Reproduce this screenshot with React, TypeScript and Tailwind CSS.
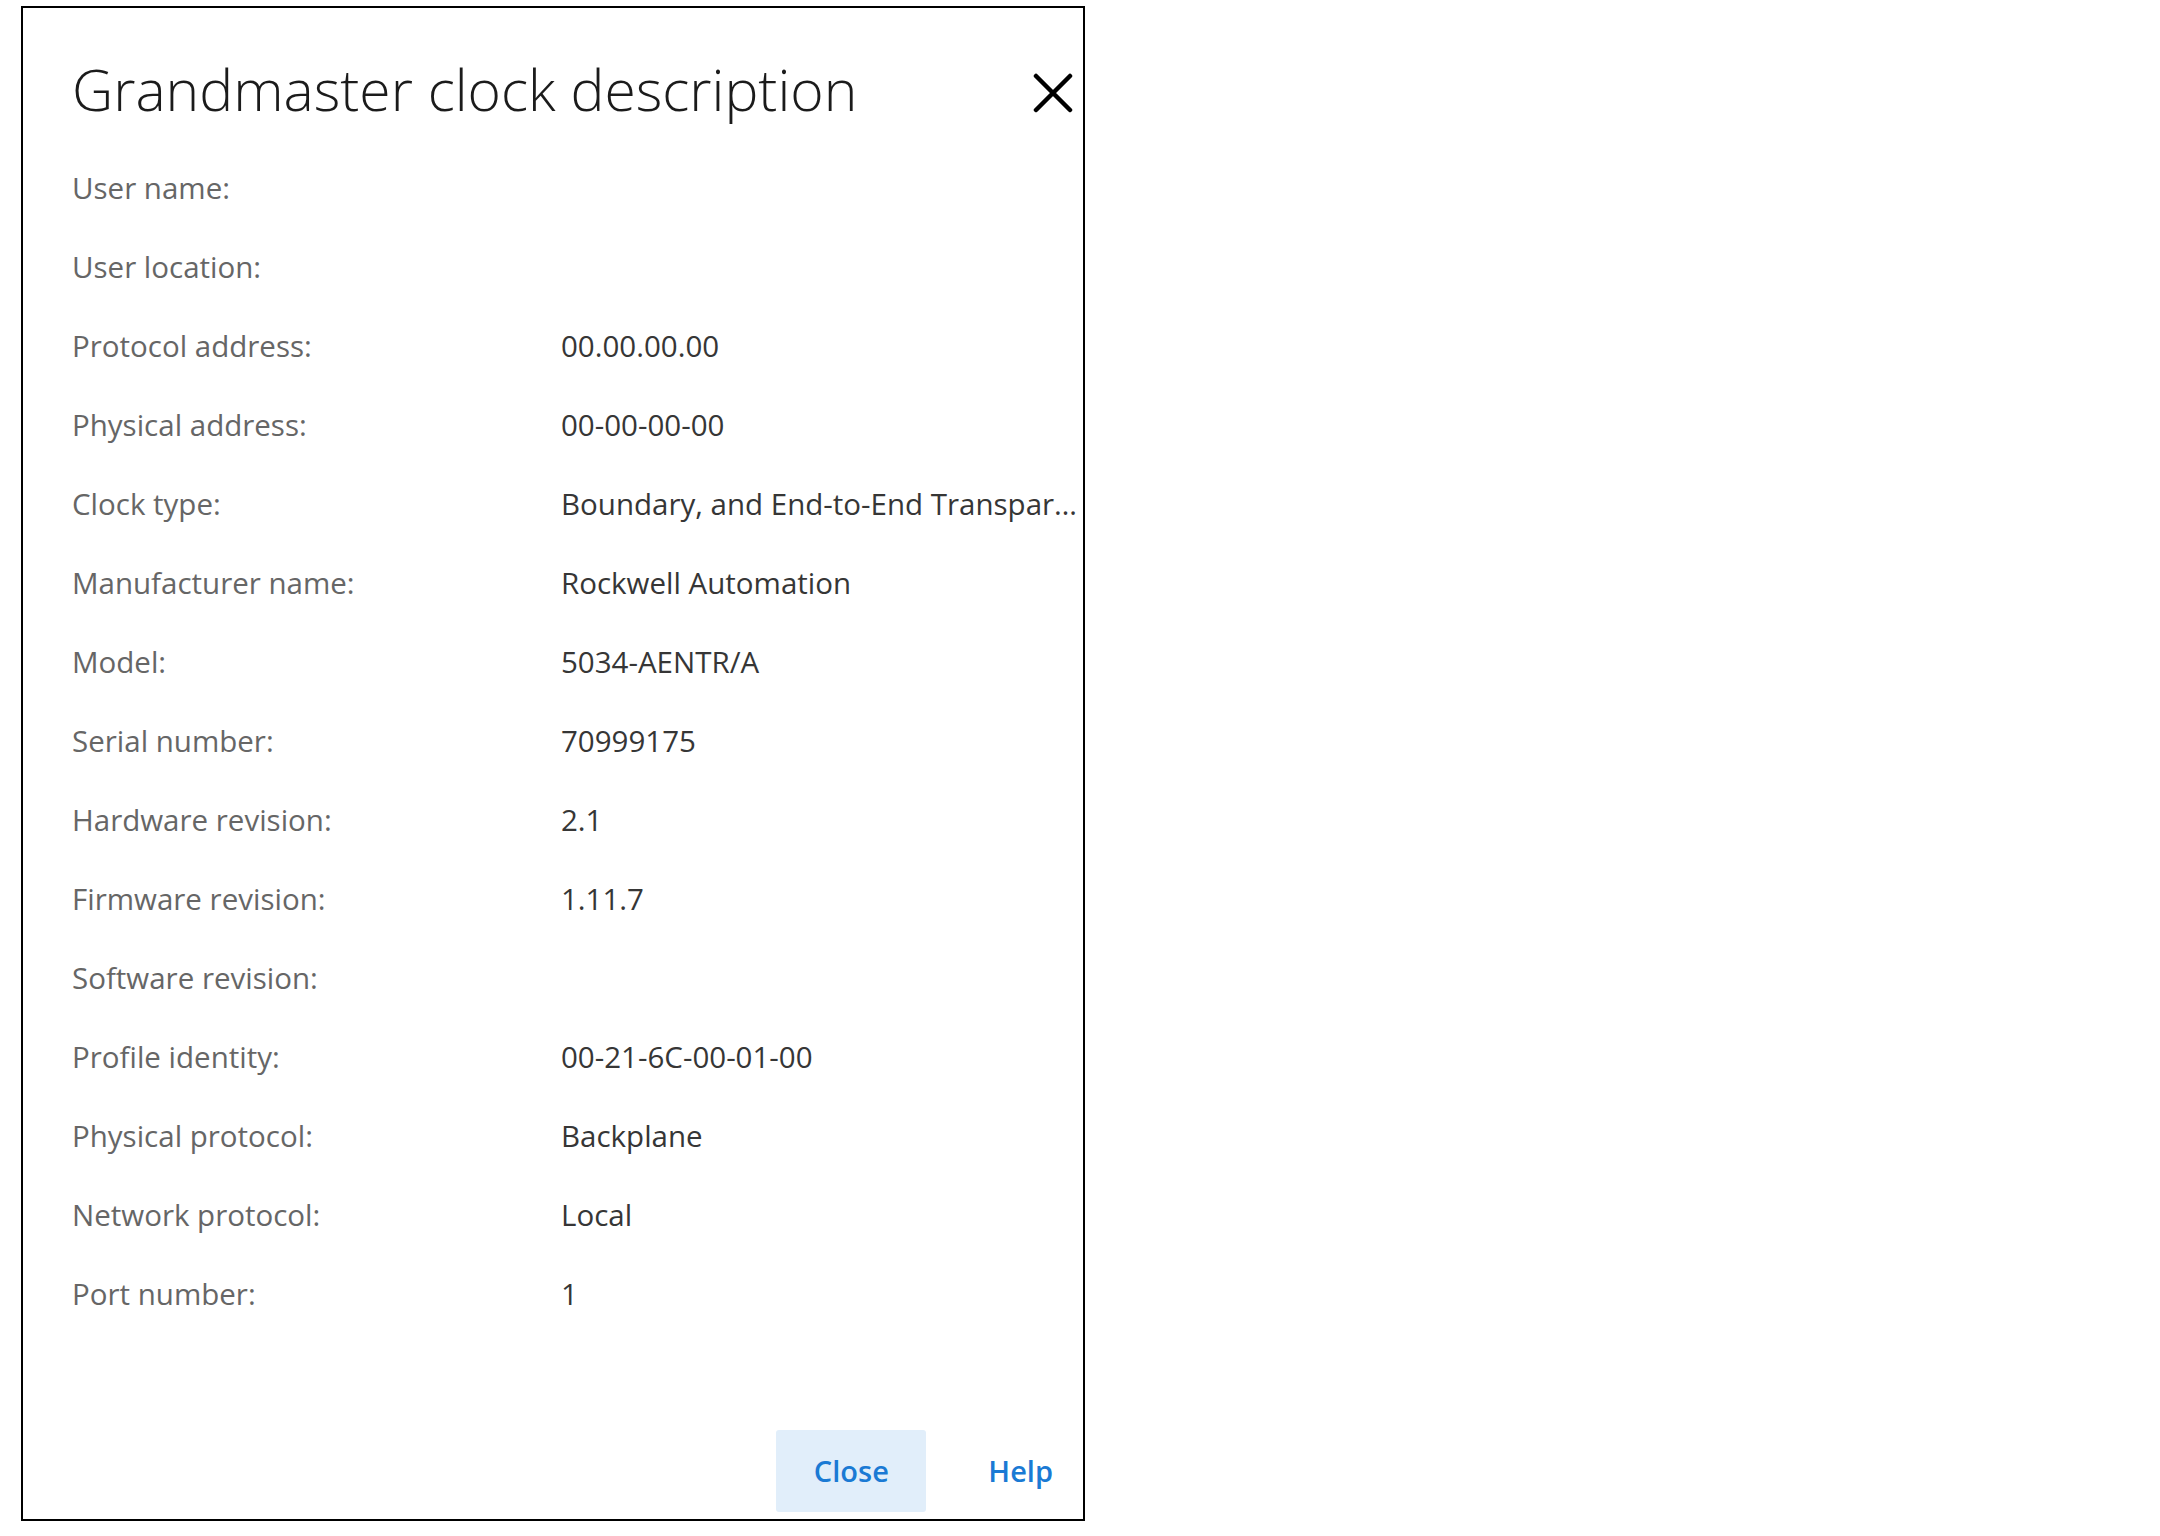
import React from "react";

const rows: [string, string][] = [
  ["User name:", ""],
  ["User location:", ""],
  ["Protocol address:", "00.00.00.00"],
  ["Physical address:", "00-00-00-00"],
  ["Clock type:", "Boundary, and End-to-End Transparent"],
  ["Manufacturer name:", "Rockwell Automation"],
  ["Model:", "5034-AENTR/A"],
  ["Serial number:", "70999175"],
  ["Hardware revision:", "2.1"],
  ["Firmware revision:", "1.11.7"],
  ["Software revision:", ""],
  ["Profile identity:", "00-21-6C-00-01-00"],
  ["Physical protocol:", "Backplane"],
  ["Network protocol:", "Local"],
  ["Port number:", "1"],
];

export default function App() {
  return (
    <div className="w-[2160px] h-[1536px] bg-white pt-[6px] pl-[21px] font-['Open_Sans',sans-serif]">
      <div className="w-[1064px] h-[1515px] border-2 border-black flex flex-col pl-[49px]">
        <div className="flex items-start pt-[47px] pr-[10px]">
          <h1 className="h-[68px] leading-[68px] text-[57px] font-light text-[#1b1b1b] whitespace-nowrap">
            Grandmaster clock description
          </h1>
          <button className="ml-auto mt-[18px] w-[40px] h-[40px]" aria-label="Close">
            <svg width="40" height="40" viewBox="0 0 40 40">
              <path d="M3 3 L37 37 M37 3 L3 37" stroke="#000" strokeWidth="4.5" strokeLinecap="round" fill="none" />
            </svg>
          </button>
        </div>
        <div className="mt-[26px] flex flex-col">
          {rows.map(([k, v]) => (
            <div key={k} className="flex items-center h-[79px] text-[29.5px]">
              <div className="w-[489px] shrink-0 text-[#666666] whitespace-nowrap">{k}</div>
              <div className="flex-1 min-w-0 truncate text-[#363636]">{v}</div>
            </div>
          ))}
        </div>
        <div className="mt-auto flex justify-end items-center pb-[7px] pr-[30px]">
          <button className="w-[150px] h-[82px] rounded-[3px] bg-[#e1eefa] text-[#1a7ad4] text-[29px] font-semibold">
            Close
          </button>
          <button className="ml-[62px] h-[82px] text-[#1a7ad4] text-[29px] font-semibold">Help</button>
        </div>
      </div>
    </div>
  );
}
